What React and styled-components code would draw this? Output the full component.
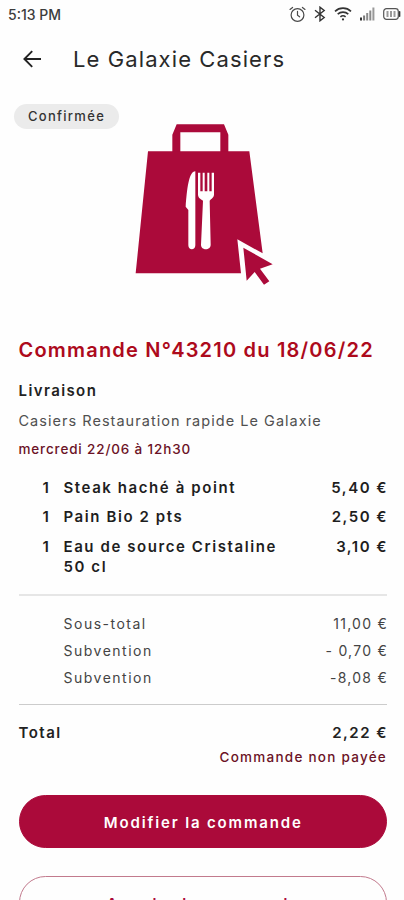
import React from 'react';
import styled, { createGlobalStyle } from 'styled-components';

const GlobalStyle = createGlobalStyle`
    * {
        box-sizing: border-box;
    }

    body {
        margin: 0;
        background-color: #fefefe;
        font-family: Inter, "Open Sans", sans-serif;
        color: #222;
    }
`;

const Screen = styled.div`
    width: 100%;
    height: 900px;
    overflow: hidden;
`;

const StatusBar = styled.div`
    display: flex;
    align-items: center;
    justify-content: space-between;
    height: 28px;
    padding: 0 3px 0 8px;
`;

const Clock = styled.span`
    font-size: 14px;
    font-weight: 500;
    letter-spacing: 0;
    color: #3c3c3c;
`;

const StatusIcons = styled.div`
    display: flex;
    align-items: center;
    gap: 8px;

    svg {
        display: block;
    }
`;

const AppBar = styled.header`
    display: flex;
    align-items: center;
    height: 62px;
    padding-left: 22px;
`;

const BackButton = styled.button`
    display: flex;
    width: 51px;
    padding: 0;
    border: 0;
    background: none;
`;

const Title = styled.h1`
    margin: 0;
    font-size: 22px;
    font-weight: 400;
    letter-spacing: 1.1px;
    color: #292929;
`;

const Hero = styled.div`
    position: relative;
    display: flex;
    justify-content: center;
    height: 241px;
    padding-top: 20px;
`;

const Badge = styled.span`
    position: absolute;
    top: 14px;
    left: 14px;
    width: 105px;
    border-radius: 13px;
    background-color: #ebebeb;
    font-size: 13px;
    font-weight: 500;
    line-height: 25px;
    letter-spacing: 1.3px;
    text-align: center;
    color: #333;
`;

const Content = styled.main`
    padding: 0 17px 0 18.5px;
`;

const OrderTitle = styled.h2`
    margin: 0;
    font-size: 20px;
    font-weight: 600;
    line-height: 38px;
    letter-spacing: 1.2px;
    white-space: nowrap;
    color: #ad0a1c;
`;

const Text = styled.p`
    margin: 0;
    font-size: ${(props) => props.$size || 14}px;
    font-weight: ${(props) => props.$weight || 400};
    line-height: ${(props) => props.$line}px;
    letter-spacing: ${(props) => props.$spacing || 0}px;
    text-align: ${(props) => props.$align || 'left'};
    white-space: nowrap;
    color: ${(props) => props.$color || '#222'};
`;

const ItemList = styled.ul`
    display: grid;
    gap: 9.5px;
    margin: 0;
    padding: 7.5px 0 17px;
    list-style: none;
`;

const Item = styled.li`
    display: grid;
    grid-template-columns: 45px 1fr auto;
    font-size: 15px;
    font-weight: 600;
    line-height: 20px;
    letter-spacing: 1.58px;
    color: #1e1e1e;
`;

const Quantity = styled.span`
    padding-left: 24px;
`;

const ItemName = styled.span`
    max-width: 225px;
`;

const Price = styled.span`
    margin-right: -1px;
    letter-spacing: 1.5px;
    white-space: nowrap;
`;

const Divider = styled.hr`
    height: ${(props) => props.$height}px;
    margin: 0;
    border: 0;
    background-color: ${(props) => props.$color};
`;

const Summary = styled.div`
    padding: 14px 0 13.5px;
`;

const SummaryRow = styled.div`
    display: flex;
    justify-content: space-between;
    padding-left: 45px;
    font-size: 14px;
    line-height: 27px;
    letter-spacing: 1.5px;
    color: #444;

    ${Price} {
        letter-spacing: 1.25px;
    }
`;

const TotalRow = styled.div`
    display: flex;
    justify-content: space-between;
    padding-top: 14px;
    font-size: 15px;
    font-weight: 600;
    line-height: 28px;
    letter-spacing: 1.5px;
`;

const Button = styled.button`
    display: block;
    width: 100%;
    height: 53px;
    margin-top: ${(props) => props.$top}px;
    padding: 1px 0 0 1px;
    border: 1px solid ${(props) => (props.$outlined ? '#c27a8d' : '#ab0a3a')};
    border-radius: 27px;
    background-color: ${(props) => (props.$outlined ? 'transparent' : '#ab0a3a')};
    font-family: inherit;
    font-size: 15px;
    font-weight: 600;
    letter-spacing: 1.85px;
    color: ${(props) => (props.$outlined ? '#ab0a3a' : '#fff')};
`;

const AlarmIcon = () => (
    <svg width="17" height="17" viewBox="0 0 17 17" fill="none" stroke="#4a4a4a" strokeWidth="1.2" strokeLinecap="round">
        <circle cx="8.5" cy="9" r="6.4" />
        <path d="M8.5 5.4v3.8l2.1 1.6M1 3.4l2.6-2M16 3.4l-2.6-2" />
    </svg>
);

const BluetoothIcon = () => (
    <svg width="12" height="16" viewBox="0 0 12 16" fill="none" stroke="#333" strokeWidth="1.4">
        <path d="M1 4.2l9.2 7.3L6 14.8V1.2l4.2 3.3L1 11.8" />
    </svg>
);

const WifiIcon = () => (
    <svg width="18" height="14" viewBox="0 0 18 14" fill="none" stroke="#333" strokeWidth="1.6">
        <path d="M1 4.3a11.6 11.6 0 0 1 16 0M3.7 7.2a7.8 7.8 0 0 1 10.6 0M6.4 9.9a4 4 0 0 1 5.2 0" />
        <circle cx="9" cy="12.4" r="1.1" fill="#333" stroke="none" />
    </svg>
);

const SignalIcon = () => (
    <svg width="15" height="14" viewBox="0 0 15 14">
        <rect x="0" y="10.5" width="2" height="3" fill="#333" />
        <rect x="3.1" y="8.5" width="2" height="5" fill="#777" />
        <rect x="6.2" y="6" width="2" height="7.5" fill="#8a8a8a" />
        <rect x="9.3" y="3.5" width="2" height="10" fill="#8a8a8a" />
        <rect x="12.4" y="0.5" width="2" height="13" fill="#999" />
    </svg>
);

const BatteryIcon = () => (
    <svg width="18" height="12" viewBox="0 0 18 12" fill="none">
        <rect x="0.7" y="0.7" width="14.6" height="10.6" rx="2.8" stroke="#555" strokeWidth="1.2" />
        <path d="M16.6 3.8v4.4" stroke="#333" strokeWidth="1.5" strokeLinecap="round" />
        <path d="M4.5 3v6M8 3v6M11.5 3v6" stroke="#999" strokeWidth="2" />
    </svg>
);

const BackIcon = () => (
    <svg width="19" height="18" viewBox="0 0 19 18" fill="none" stroke="#222" strokeWidth="1.9">
        <path d="M19 9H2M10.2 1.2L2.4 9l7.8 7.8" />
    </svg>
);

const BagIcon = () => (
    <svg width="170" height="190" viewBox="-9 0 510 570" fill="#ab0a3a">
        <path d="M157 126V74l13-31h142l13 31v52h-24V67H181v59z" />
        <path d="M84 124h304l40 306-76-42 11 102H47z" />
        <path d="M370 413l88 50-38 13 28 38-16 10-28-38-24 26z" />
        <g fill="#fff">
            <path d="M226 184v222c0 16-21 16-21 0V300l-8-10c4-50 9-106 29-106z" />
            <path d="M234 188h7v56h7v-56h6v56h8v-56h6v56h7v-56h7v65c0 10-8 14-13 19l3 132c0 18-29 18-29 0l6-132c-8-5-15-8-15-19z" />
        </g>
    </svg>
);

const items = [
    { quantity: 1, name: 'Steak haché à point', price: '5,40 €' },
    { quantity: 1, name: 'Pain Bio 2 pts', price: '2,50 €' },
    { quantity: 1, name: 'Eau de source Cristaline 50 cl', price: '3,10 €' },
];

const summary = [
    { label: 'Sous-total', amount: '11,00 €' },
    { label: 'Subvention', amount: '- 0,70 €' },
    { label: 'Subvention', amount: '-8,08 €' },
];

export default () => {
    return (
        <Screen>
            <GlobalStyle />
            <StatusBar>
                <Clock>5:13 PM</Clock>
                <StatusIcons>
                    <AlarmIcon />
                    <BluetoothIcon />
                    <WifiIcon />
                    <SignalIcon />
                    <BatteryIcon />
                </StatusIcons>
            </StatusBar>
            <AppBar>
                <BackButton aria-label="Retour"><BackIcon /></BackButton>
                <Title>Le Galaxie Casiers</Title>
            </AppBar>
            <Hero>
                <Badge>Confirmée</Badge>
                <BagIcon />
            </Hero>
            <Content>
                <OrderTitle>Commande N°43210 du 18/06/22</OrderTitle>
                <Text $size={15} $weight={600} $line={43} $spacing={1.4}>Livraison</Text>
                <Text $size={14.5} $line={17} $spacing={1.03} $color="#505050">Casiers Restauration rapide Le Galaxie</Text>
                <Text $size={13.5} $weight={500} $line={41} $spacing={0.85} $color="#6b1226">mercredi 22/06 à 12h30</Text>
                <ItemList>
                    {items.map((item) => (
                        <Item key={item.name}>
                            <Quantity>{item.quantity}</Quantity>
                            <ItemName>{item.name}</ItemName>
                            <Price>{item.price}</Price>
                        </Item>
                    ))}
                </ItemList>
                <Divider $height={2} $color="#e6e6e6" />
                <Summary>
                    {summary.map((row, index) => (
                        <SummaryRow key={index}>
                            <span>{row.label}</span>
                            <Price>{row.amount}</Price>
                        </SummaryRow>
                    ))}
                </Summary>
                <Divider $height={1} $color="#ccc" />
                <TotalRow>
                    <span>Total</span>
                    <Price>2,22 €</Price>
                </TotalRow>
                <Text $size={13.5} $weight={500} $line={21} $spacing={1.25} $align="right" $color="#6b1226">Commande non payée</Text>
                <Button $top={27}>Modifier la commande</Button>
                <Button $top={28} $outlined>Annuler la commande</Button>
            </Content>
        </Screen>
    )
}
